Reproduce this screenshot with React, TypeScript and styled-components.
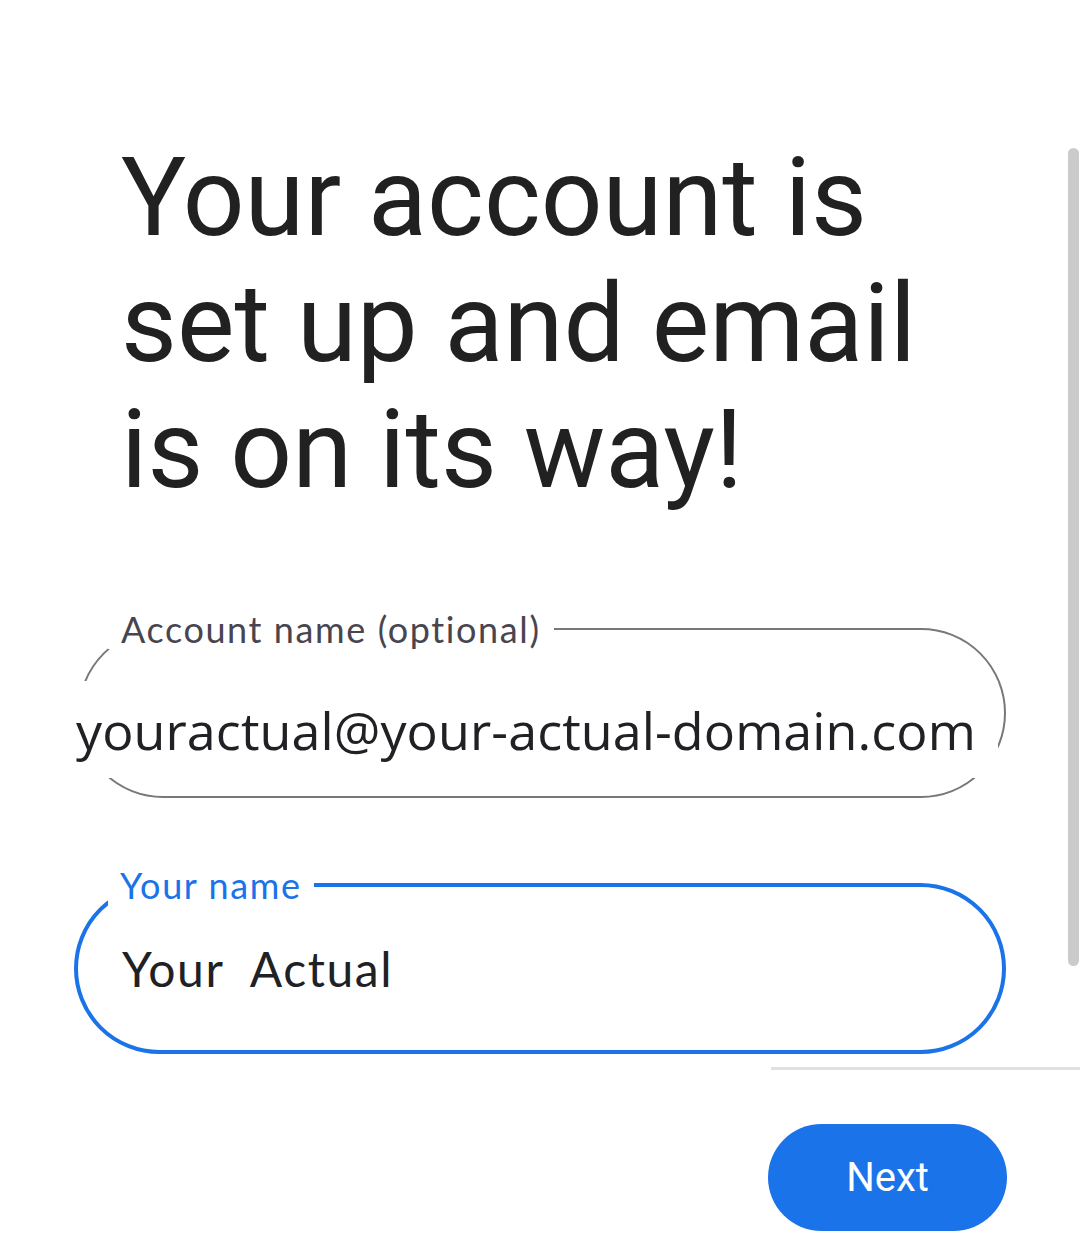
import { createGlobalStyle, styled } from "styled-components";

const GlobalStyle = createGlobalStyle`
    html, body {
        margin: 0;
        padding: 0;
        background: #ffffff;
    }

    body {
        font-family: Roboto, "Liberation Sans", sans-serif;
        color: #212121;
    }
`;

export default function App() {
    return (
        <Page>
            <GlobalStyle />
            <Scrollbar />

            <Title>Your account is set up and email is on its way!</Title>

            <Form>
                <Field $focused={false}>
                    <Legend $focused={false}>Account name (optional)</Legend>
                    <EmailValue>youractual@your-actual-domain.com</EmailValue>
                </Field>

                <Field $focused>
                    <Legend $focused>Your name</Legend>
                    <NameValue>Your&nbsp; Actual</NameValue>
                </Field>
            </Form>

            <Footer>
                <Divider />
                <ButtonRow>
                    <NextButton type="button">Next</NextButton>
                </ButtonRow>
            </Footer>
        </Page>
    );
}

const Page = styled.div`
    position: relative;
    width: 1080px;
    min-height: 1260px;

    display: flex;
    flex-direction: column;

    padding-top: 135px;
    box-sizing: border-box;
`;

const Scrollbar = styled.div`
    position: absolute;
    top: 148px;
    right: 1px;

    width: 11px;
    height: 818px;

    border-radius: 6px;
    background-color: #cbcbcb;
`;

const Title = styled.h1`
    margin: 0 0 0 121px;
    width: 880px;

    font-family: Roboto, "Liberation Sans", sans-serif;
    font-size: 108.5px;
    font-weight: 400;
    line-height: 126px;
    color: #212121;
`;

const Form = styled.div`
    display: flex;
    flex-direction: column;
    gap: 67px;

    margin-top: 96px;
    padding-left: 74px;
`;

const Field = styled.fieldset<{ $focused: boolean }>`
    box-sizing: border-box;
    margin: 0;
    min-inline-size: 0;

    width: ${(p) => (p.$focused ? 932 : 928)}px;
    margin-left: ${(p) => (p.$focused ? 0 : 4)}px;
    padding: 0;

    border: ${(p) => (p.$focused ? "4px solid #1a73e8" : "2px solid #79767d")};
    border-radius: 86px;
`;

const Legend = styled.legend<{ $focused: boolean }>`
    margin-left: ${(p) => (p.$focused ? 30 : 28)}px;
    padding: 0 ${(p) => (p.$focused ? 12 : 13)}px;

    font-family: Lato, "Open Sans", sans-serif;
    font-size: 36px;
    letter-spacing: 1.6px;
    line-height: 40px;
    color: ${(p) => (p.$focused ? "#1a73e8" : "#49454f")};
`;

const EmailValue = styled.div`
    margin: 32px 6px 18px -4px;
    height: 97px;

    display: flex;
    align-items: center;

    background-color: #ffffff;

    font-family: "Open Sans", "Noto Sans", sans-serif;
    font-size: 52px;
    letter-spacing: 0.1px;
    color: #202124;
    white-space: nowrap;
`;

const NameValue = styled.div`
    height: 126px;
    padding: 0 0 19px 44px;

    display: flex;
    align-items: center;

    font-family: Lato, "Open Sans", sans-serif;
    font-size: 48px;
    letter-spacing: 1.6px;
    color: #202124;
    white-space: nowrap;
`;

const Footer = styled.div`
    display: flex;
    flex-direction: column;
    margin-top: 13px;
`;

const Divider = styled.div`
    align-self: flex-end;
    width: 309px;
    height: 3px;
    background-color: #e0e0e0;
`;

const ButtonRow = styled.div`
    display: flex;
    justify-content: flex-end;
    padding: 54px 73px 0 0;
`;

const NextButton = styled.button`
    width: 239px;
    height: 107px;

    border: none;
    border-radius: 54px;
    background-color: #1a73e8;

    font-family: Roboto, "Liberation Sans", sans-serif;
    font-size: 40px;
    font-weight: 400;
    color: #ffffff;

    cursor: pointer;
`;
